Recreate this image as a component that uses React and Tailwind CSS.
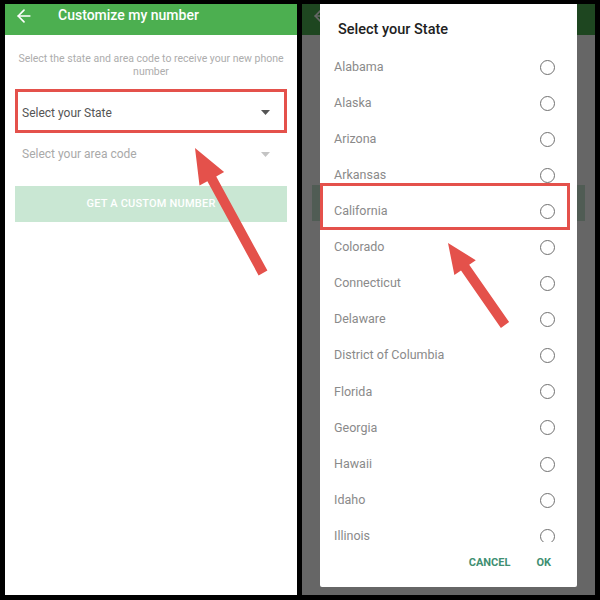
import { ArrowLeft } from 'lucide-react'

const states = [
  'Alabama',
  'Alaska',
  'Arizona',
  'Arkansas',
  'California',
  'Colorado',
  'Connecticut',
  'Delaware',
  'District of Columbia',
  'Florida',
  'Georgia',
  'Hawaii',
  'Idaho',
  'Illinois',
]

const Caret = ({ color }) => (
  <svg width="9" height="5" viewBox="0 0 9 5">
    <polygon points="0,0 9,0 4.5,5" fill={color} />
  </svg>
)

const Header = ({ title }) => (
  <div className="h-[31px] bg-[#4caf50] flex items-center pb-[8px] pl-[9px]">
    <ArrowLeft size={20} strokeWidth={2} className="text-white" />
    {title && <span className="ml-[24px] text-[14px] font-medium text-white">{title}</span>}
  </div>
)

const App = () => {
  return (
    <div className="w-[600px] h-[600px] bg-black flex gap-[5px] pl-[5px] pr-[5px] pt-[4px] pb-[5px] font-['Roboto',sans-serif]">
      {/* left screen */}
      <div className="relative w-[292px] bg-white overflow-hidden flex flex-col">
        <Header title="Customize my number" />
        <p className="mt-[17px] px-[10px] text-center text-[10.5px] leading-[13px] text-[#adadad]">
          Select the state and area code to receive your new phone number
        </p>
        <div className="mt-[11px] mx-[10px] h-[44px] border-[3px] border-[#e4514b] flex items-center justify-between pl-[4px] pr-[14px] pt-[3px]">
          <span className="text-[12px] text-[#555]">Select your State</span>
          <Caret color="#555" />
        </div>
        <div className="mx-[10px] h-[42px] flex items-center justify-between pl-[7px] pr-[17px]">
          <span className="text-[12px] text-[#a9a9a9]">Select your area code</span>
          <Caret color="#c4c4c4" />
        </div>
        <div className="mt-[11px] mx-[10px] h-[36px] bg-[#c9e7d3] flex items-center justify-center">
          <span className="text-[11px] font-medium text-white tracking-[0.2px]">GET A CUSTOM NUMBER</span>
        </div>
        <svg className="absolute inset-0" width="292" height="591">
          <polygon
            points="190,144 219.1,168.1 211.2,172.4 262.4,266.6 253.6,271.4 202.4,177.2 194.5,181.5"
            fill="#e4514b"
          />
        </svg>
      </div>

      {/* right screen, dimmed, with the dialog */}
      <div className="relative flex-1 bg-white overflow-hidden flex flex-col">
        <Header />
        <div className="mt-[150px] mx-[10px] h-[36px] bg-[#c9e7d3]" />
        <div className="absolute inset-0 bg-black/60" />

        <div className="absolute top-0 left-[18px] w-[257px] h-[583px] bg-white rounded-b-[2px] flex flex-col">
          <div className="h-[45px] flex items-center pl-[18px] pt-[7px]">
            <span className="text-[14.5px] font-medium text-[#212121]">Select your State</span>
          </div>
          <div className="h-[493px] overflow-hidden">
            {states.map((s) => (
              <div key={s} className="h-[36.1px] flex items-center justify-between pl-[14px] pr-[22px]">
                <span className="text-[12.5px] text-[#8a8a8a]">{s}</span>
                <span className="w-[15px] h-[15px] rounded-full border-[1.5px] border-[#707070]" />
              </div>
            ))}
          </div>
          <div className="flex-1 flex items-center justify-end gap-[26px] pr-[26px] pb-[2px]">
            <span className="text-[11px] font-bold text-[#3f8f72]">CANCEL</span>
            <span className="text-[11px] font-bold text-[#3f8f72]">OK</span>
          </div>
        </div>

        <div className="absolute left-[18px] top-[179px] w-[250px] h-[47px] border-[3px] border-[#e4514b]" />
        <svg className="absolute inset-0" width="293" height="591">
          <polygon
            points="146,239 173.8,256.2 167.2,260.7 207.1,318.1 198.9,323.9 159,266.5 152.4,271"
            fill="#e4514b"
          />
        </svg>
      </div>
    </div>
  )
}

export default App
